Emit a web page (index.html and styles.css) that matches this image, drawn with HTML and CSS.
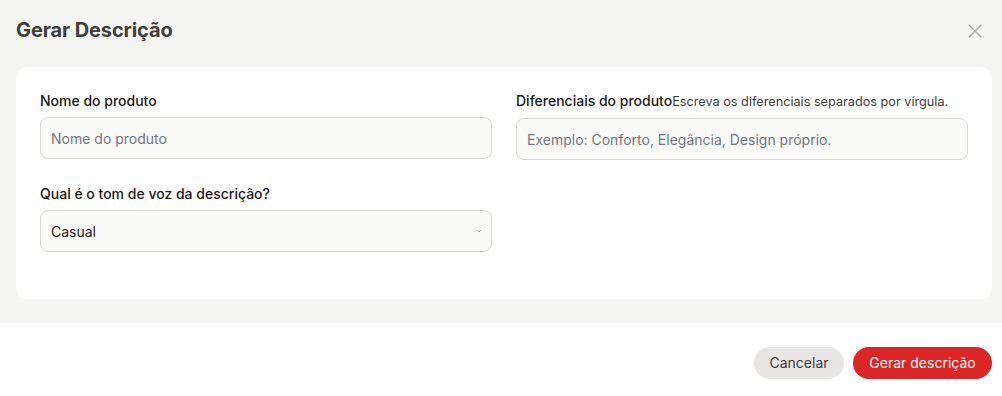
FILE: index.html
```html
<!DOCTYPE html>
<html lang="pt">
<head>
<meta charset="utf-8">
<link rel="stylesheet" href="styles.css">
</head>
<body>
<div class="dialog">
  <div class="main">
    <div class="header">
      <h1 class="title">Gerar Descrição</h1>
      <button class="close" aria-label="Fechar">
        <svg width="16" height="16" viewBox="0 0 16 16" fill="none" stroke="currentColor" stroke-width="1.3" stroke-linecap="round"><path d="M2 2L14 14M14 2L2 14"/></svg>
      </button>
    </div>
    <div class="card">
      <div class="grid">
        <div class="field">
          <label class="label">Nome do produto</label>
          <input class="input" placeholder="Nome do produto">
        </div>
        <div class="field">
          <label class="label">Diferenciais do produto<span class="hint">Escreva os diferenciais separados por vírgula.</span></label>
          <input class="input" placeholder="Exemplo: Conforto, Elegância, Design próprio.">
        </div>
        <div class="field">
          <label class="label">Qual é o tom de voz da descrição?</label>
          <div class="select">
            <span>Casual</span>
            <svg class="chev" width="6" height="4" viewBox="0 0 6 4" fill="none" stroke="#b5b3ae" stroke-width="1"><path d="M1 1L3 3L5 1"/></svg>
          </div>
        </div>
      </div>
    </div>
  </div>
  <div class="footer">
    <button class="btn btn-cancel">Cancelar</button>
    <button class="btn btn-primary">Gerar descrição</button>
  </div>
</div>
</body>
</html>
```
FILE: styles.css
```css
* { box-sizing: border-box; }
html, body { margin: 0; padding: 0; background: #ffffff; }
body { font-family: Inter, "Noto Sans", sans-serif; color: #1c1917; }
.dialog { width: 1002px; height: 396px; display: flex; flex-direction: column; }
.main { background: #f5f5f3; padding: 16px 10px 24px 16px; }
.header { display: flex; align-items: center; justify-content: space-between; height: 28px; margin-bottom: 23px; }
.title { margin: 0; font-size: 20px; font-weight: 700; color: #403e3a; line-height: 28px; letter-spacing: -0.1px; }
.close { border: 0; background: none; padding: 0; width: 20px; height: 20px; display: flex; align-items: center; justify-content: center; color: #a8a6a2; margin-right: 7px; margin-top: 2px; }
.card { background: #ffffff; border-radius: 12px; padding: 24px 24px 47px 24px; width: 976px; }
.grid { display: grid; grid-template-columns: 452px 452px; column-gap: 24px; row-gap: 24px; }
.field { display: flex; flex-direction: column; gap: 6px; }
.label { font-size: 14px; font-weight: 450; line-height: 20px; color: #1c1917; white-space: nowrap; }
.hint { font-size: 12.7px; font-weight: 400; color: #3f3d3a; }
.input, .select { height: 42px; border: 1px solid #d9d7d3; border-radius: 8px; background: #fafaf9; padding: 0 10px; font-family: inherit; font-size: 14px; color: #1c1917; width: 100%; }
.input::placeholder { color: #737780; }
.input { outline: none; }
.select { display: flex; align-items: center; justify-content: space-between; padding-right: 9px; }
.footer { flex: 1; display: flex; justify-content: flex-end; align-items: flex-start; gap: 9px; padding: 24px 10px 0 0; }
.btn { border: 0; height: 32px; border-radius: 999px; font-family: inherit; font-size: 14px; line-height: 32px; padding: 0; }
.btn-cancel { background: #e7e6e4; color: #3f3d3a; width: 90px; }
.btn-primary { background: #dc2626; color: #ffffff; width: 139px; }
```
